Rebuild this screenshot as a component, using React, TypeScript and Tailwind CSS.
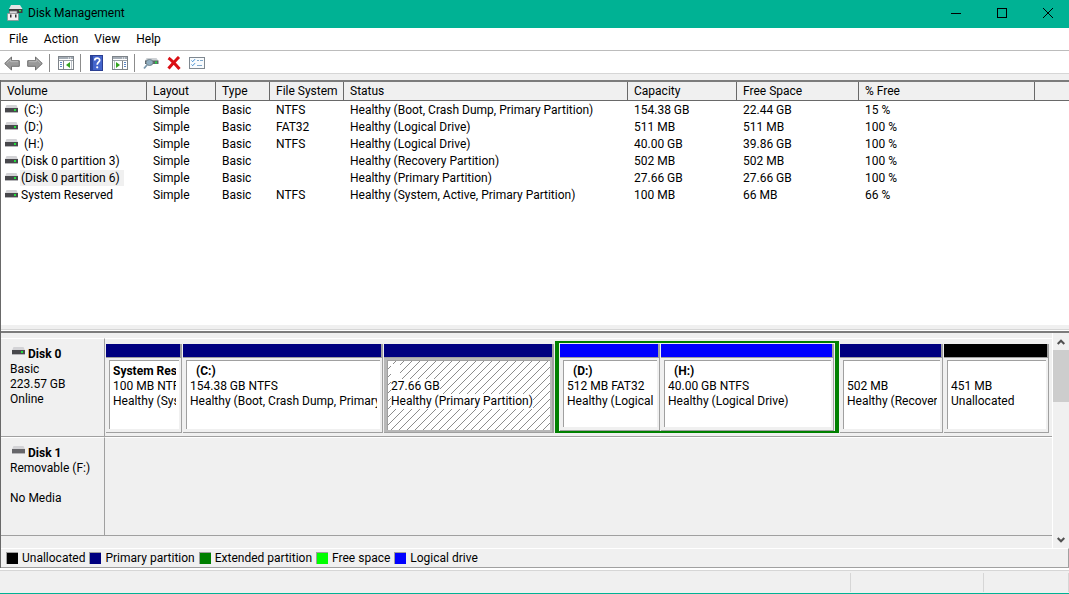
import { useState } from 'react';
import type { ReactNode } from 'react';
import clsx from 'clsx';

type Volume = {
  name: string;
  fs: string;
  status: string;
  capacity: string;
  free: string;
  percent: string;
};

const volumes: Volume[] = [
  { name: ' (C:)', fs: 'NTFS', status: 'Healthy (Boot, Crash Dump, Primary Partition)', capacity: '154.38 GB', free: '22.44 GB', percent: '15 %' },
  { name: ' (D:)', fs: 'FAT32', status: 'Healthy (Logical Drive)', capacity: '511 MB', free: '511 MB', percent: '100 %' },
  { name: ' (H:)', fs: 'NTFS', status: 'Healthy (Logical Drive)', capacity: '40.00 GB', free: '39.86 GB', percent: '100 %' },
  { name: '(Disk 0 partition 3)', fs: '', status: 'Healthy (Recovery Partition)', capacity: '502 MB', free: '502 MB', percent: '100 %' },
  { name: '(Disk 0 partition 6)', fs: '', status: 'Healthy (Primary Partition)', capacity: '27.66 GB', free: '27.66 GB', percent: '100 %' },
  { name: 'System Reserved', fs: 'NTFS', status: 'Healthy (System, Active, Primary Partition)', capacity: '100 MB', free: '66 MB', percent: '66 %' },
];

const columns = [
  { label: 'Volume', width: 'w-[146px]' },
  { label: 'Layout', width: 'w-[69px]' },
  { label: 'Type', width: 'w-[54px]' },
  { label: 'File System', width: 'w-[74px]' },
  { label: 'Status', width: 'w-[284px]' },
  { label: 'Capacity', width: 'w-[109px]' },
  { label: 'Free Space', width: 'w-[122px]' },
  { label: '% Free', width: 'w-[176px]' },
];

const legend = [
  { label: 'Unallocated', color: 'bg-black' },
  { label: 'Primary partition', color: 'bg-[#000080]' },
  { label: 'Extended partition', color: 'bg-[#008000]' },
  { label: 'Free space', color: 'bg-[#00ff00]' },
  { label: 'Logical drive', color: 'bg-[#0000ff]' },
];

function DriveIcon({ led = true }: { led?: boolean }) {
  return (
    <svg width="13" height="8" viewBox="0 0 13 8" className="shrink-0" aria-hidden="true">
      <path d="M1.5 0h10L13 3.5H0z" fill="#d3d3d6" />
      <rect y="3" width="13" height="4" fill={led ? '#48484c' : '#66666a'} />
      <rect y="7" width="13" height="1" fill="#b5b5b8" />
      {led && <rect x="9" y="4" width="2" height="2" fill="#22e03c" />}
    </svg>
  );
}

function AppIcon() {
  return (
    <svg width="16" height="16" viewBox="0 0 16 16" aria-hidden="true">
      <path d="M4 0h9l2.5 4H2z" fill="#e4e4e6" />
      <path d="M2 4h13.5v4H2z" fill="#3d3d40" />
      <path d="M12 5h2v1.5h-2z" fill="#33e04a" />
      <path d="M2.5 6H10v3H2.5z" fill="#d9d9db" stroke="#77777a" strokeWidth=".7" />
      <path d="M.5 8.5h11v7H.5z" fill="#f1f1f2" stroke="#8a8a8d" strokeWidth=".7" />
      <path d="M3 9.5h1.5v3H3zM8 9.5h1.5v3H8z" fill="#333" />
    </svg>
  );
}

function ArrowIcon({ flip }: { flip?: boolean }) {
  return (
    <svg width="16" height="15" viewBox="0 0 16 15" className={clsx(flip && '-scale-x-100')} aria-hidden="true">
      <path d="M.7 7.5 7.5 1v3.7h7.8v5.6H7.5V14z" fill="#999" stroke="#6f6f6f" strokeWidth="1" strokeLinejoin="round" />
      <path d="M2.5 7.2 6.7 3.2v2.5h7.4" fill="none" stroke="#bbb" strokeWidth="1" />
    </svg>
  );
}

function PaneIcon({ right }: { right?: boolean }) {
  return (
    <svg width="16" height="14" viewBox="0 0 16 14" aria-hidden="true">
      <rect x=".5" y=".5" width="15" height="13" fill="#fff" stroke="#7d8389" />
      <path d="M1 1h14v2H1z" fill="#a5adb6" />
      <path d="M10 1.5h1v1h-1zM12 1.5h1v1h-1z" fill="#fff" />
      <path d="M1 4.5h14" stroke="#9aa1a8" />
      {right ? (
        <>
          <path d="M10.5 5v8" stroke="#7d8389" />
          <path d="M12 6.5h2M12 8.5h2M12 10.5h2" stroke="#5b86c4" />
          <path d="M4 6v6l4-3z" fill="#35a51f" />
          <path d="M2.5 5v8" stroke="#b8bec5" />
        </>
      ) : (
        <>
          <path d="M5.5 5v8" stroke="#7d8389" />
          <path d="M2 6.5h2M2 8.5h2M2 10.5h2" stroke="#5b86c4" />
          <path d="M12 6v6L8 9z" fill="#35a51f" />
          <path d="M13.5 5v8" stroke="#b8bec5" />
        </>
      )}
    </svg>
  );
}

function HelpIcon() {
  return (
    <svg width="13" height="16" viewBox="0 0 13 16" aria-hidden="true">
      <rect x=".5" y=".5" width="12" height="15" fill="#4465cc" stroke="#2b3f92" />
      <path d="M1 1h2v14H1z" fill="#2d479f" />
      <path d="M4.700 5.500c0-3.200 5-3.200 5-.3 0 2-2.500 2-2.500 4.600" fill="none" stroke="#fff" strokeWidth="1.700" />
      <circle cx="7.200" cy="12.300" r="1.100" fill="#fff" />
    </svg>
  );
}

function ExploreIcon() {
  return (
    <svg width="16" height="14" viewBox="0 0 16 14" aria-hidden="true">
      <path d="M3.500 2h10l2 3H2z" fill="#cdd1d4" />
      <path d="M2 4.500h13.500v3.500H2z" fill="#5c6468" />
      <path d="M12 5.500h2v2h-2z" fill="#27d943" />
      <ellipse cx="6.500" cy="6.500" rx="3.500" ry="3" fill="#8fadc0" stroke="#75858f" />
      <path d="M4 9 1 12.500" stroke="#7b98ad" strokeWidth="1.800" />
    </svg>
  );
}

function DeleteIcon() {
  return (
    <svg width="14" height="14" viewBox="0 0 14 14" aria-hidden="true">
      <path d="M1.500 2C5 4.500 9 9 12.500 13M12 1C8.500 4.500 5 8.500 1.500 12.500" stroke="#da0f14" strokeWidth="3" fill="none" />
    </svg>
  );
}

function ListIcon() {
  return (
    <svg width="16" height="12" viewBox="0 0 16 12" aria-hidden="true">
      <rect x=".5" y=".5" width="15" height="11" fill="#f8fbfd" stroke="#7f8890" />
      <path d="m2.500 3.500 1.200 1.200L6 2.200M2.500 7.500l1.200 1.200L6 6.200" stroke="#3a8ad0" fill="none" />
      <path d="M8 3.500h2M11 3.500h3M8 8.500h5" stroke="#7fa8cc" />
    </svg>
  );
}

function ToolButton({ label, children }: { label: string; children: ReactNode }) {
  return (
    <button type="button" aria-label={label} title={label} className="flex h-5 w-[23px] items-center justify-center">
      {children}
    </button>
  );
}

function ToolDivider() {
  return <div className="mr-1 ml-[3px] h-[18px] w-px bg-[#8c8c8c]" />;
}

function Cell({ children }: { children?: ReactNode }) {
  return <td className="p-0 pt-0.5 pl-1.5 leading-[15px]">{children}</td>;
}

type PartitionProps = {
  grow: string;
  color: string;
  title?: string;
  size: string;
  status: string;
  selected?: boolean;
};

function Partition({ grow, color, title, size, status, selected }: PartitionProps) {
  return (
    <div className={clsx('flex min-w-0 basis-0 flex-col', grow)}>
      <div className="mr-px border-r-2 border-[#a0a0a0]">
        <div className={clsx('h-[13px]', color)} />
      </div>
      <div
        className={clsx(
          'mr-px flex grow border-t border-b border-[#a0a0a0] p-0.5',
          selected ? 'border-r-2 bg-[#b8b8b8]' : 'border-r bg-[#f0f0f0] pb-[3px]',
        )}
      >
        <div
          className={clsx(
            'ml-px min-w-0 grow overflow-hidden border-t border-l border-[#a0a0a0] bg-white px-[3px] pt-[3px]',
            selected && 'bg-[linear-gradient(135deg,transparent_47%,#8c8c8c_47%,#8c8c8c_53%,transparent_53%)] bg-[length:8px_8px]',
          )}
        >
          <div className="flex flex-col items-start overflow-hidden leading-[15px]">
            <p className="h-[15px] bg-white font-bold whitespace-pre">{title ?? '   '}</p>
            <p className="bg-white whitespace-nowrap">{size}</p>
            <p className="bg-white whitespace-nowrap">{status}</p>
          </div>
        </div>
      </div>
    </div>
  );
}

function DiskInfo({ name, led, lines }: { name: string; led: boolean; lines: string[] }) {
  return (
    <div className="w-[104px] shrink-0 border-t border-r border-b border-t-white border-r-[#a0a0a0] border-b-[#a0a0a0] pt-2 pl-[9px] leading-[15px]">
      <h2 className="flex gap-[3px] pl-0.5 font-bold">
        <DriveIcon led={led} />
        {name}
      </h2>
      {lines.map((line, i) => (
        <p key={i} className="h-[15px]">{line}</p>
      ))}
    </div>
  );
}

export default function App() {
  const [selected, setSelected] = useState('(Disk 0 partition 6)');

  return (
    <div className="flex h-screen flex-col overflow-hidden border-b border-[#00b294] bg-[#f0f0f0] font-['Roboto','Noto_Sans',sans-serif] text-[12px] leading-[17px] text-black">
      {/* Title bar */}
      <header className="flex h-7 shrink-0 items-center bg-[#00b294] pb-0.5 pl-[7px]">
        <AppIcon />
        <h1 className="grow pl-[5px]">Disk Management</h1>
        <div className="-mr-0.5 flex">
          <button type="button" aria-label="Minimize" className="flex w-[46px] justify-center">
            <svg width="10" height="10"><path d="M0 5.500h10" stroke="#000" /></svg>
          </button>
          <button type="button" aria-label="Maximize" className="flex w-[46px] justify-center">
            <svg width="10" height="10"><rect x=".5" y=".5" width="9" height="9" fill="none" stroke="#000" /></svg>
          </button>
          <button type="button" aria-label="Close" className="flex w-[46px] justify-center">
            <svg width="10" height="10"><path d="m0 0 10 10M10 0 0 10" stroke="#000" /></svg>
          </button>
        </div>
      </header>

      <nav className="flex h-[23px] shrink-0 items-center gap-4 border-b border-[#bcbcbc] bg-white pl-[9px]">
        <button type="button">File</button>
        <button type="button">Action</button>
        <button type="button">View</button>
        <button type="button">Help</button>
      </nav>

      {/* Toolbar */}
      <div className="flex h-[23px] shrink-0 items-center border-b border-[#d6d6d6] bg-white pt-0.5">
        <ToolButton label="Back"><ArrowIcon /></ToolButton>
        <ToolButton label="Forward"><ArrowIcon flip /></ToolButton>
        <ToolDivider />
        <ToolButton label="Show/Hide Console Tree"><PaneIcon /></ToolButton>
        <ToolDivider />
        <ToolButton label="Help"><HelpIcon /></ToolButton>
        <ToolButton label="Show/Hide Action Pane"><PaneIcon right /></ToolButton>
        <ToolDivider />
        <ToolButton label="Explore"><ExploreIcon /></ToolButton>
        <ToolButton label="Delete"><DeleteIcon /></ToolButton>
        <ToolButton label="Properties"><ListIcon /></ToolButton>
      </div>

      {/* Volume list */}
      <main className="mt-1.5 flex min-h-0 grow flex-col border-l border-[#696969]">
        <div className="min-h-0 grow overflow-hidden border-t-2 border-[#7c7c7c] bg-white">
          <table className="w-full table-fixed border-separate border-spacing-0 text-left">
            <thead>
              <tr className="h-[19px] bg-[#f0f0f0]">
                {columns.map((col) => (
                  <th key={col.label} scope="col" className={clsx('border-r border-b border-[#696969] p-0 pl-1.5 font-normal whitespace-nowrap', col.width)}>
                    {col.label}
                  </th>
                ))}
                <td className="border-b border-[#696969] p-0" />
              </tr>
            </thead>
            <tbody>
              {volumes.map((v) => (
                <tr key={v.name} className="h-[17px] whitespace-nowrap" onClick={() => setSelected(v.name)}>
                  <td className="p-0">
                    <div className="flex items-start pt-px pl-1">
                      <div className="pt-[3px]"><DriveIcon /></div>
                      <span className={clsx('ml-0.5 h-4 pt-px pr-1 pl-px leading-[15px] whitespace-pre', v.name === selected && 'bg-[#f0f0f0]')}>{v.name}</span>
                    </div>
                  </td>
                  <Cell>Simple</Cell>
                  <Cell>Basic</Cell>
                  <Cell>{v.fs}</Cell>
                  <Cell>{v.status}</Cell>
                  <Cell>{v.capacity}</Cell>
                  <Cell>{v.free}</Cell>
                  <Cell>{v.percent}</Cell>
                  <Cell />
                </tr>
              ))}
            </tbody>
          </table>
        </div>
        <div className="flex h-2 shrink-0 flex-col justify-end border-b-2 border-[#7c7c7c]">
          <div className="h-0.5 border-t border-[#d6d6d6] bg-white" />
        </div>

        {/* Graphical view */}
        <div className="flex h-[215px] shrink-0">
          <div className="min-w-0 grow pt-[5px]">
            <section className="flex h-[99px]">
              <DiskInfo name="Disk 0" led lines={['Basic', '223.57 GB', 'Online']} />
              <div className="flex min-w-0 grow border-t border-b border-t-white border-b-[#a0a0a0] pt-0.5 pr-0.5 pb-[3px] pl-px">
                <div className="flex min-w-0 grow-[449] basis-0 pt-[3px]">
                  <Partition grow="grow-[77]" color="bg-[#000080]" title="System Reserved" size="100 MB NTFS" status="Healthy (System, Active, Primary Partition)" />
                  <Partition grow="grow-[201]" color="bg-[#000080]" title="  (C:)" size="154.38 GB NTFS" status="Healthy (Boot, Crash Dump, Primary Partition)" />
                  <Partition grow="grow-[171]" color="bg-[#000080]" size="27.66 GB" status="Healthy (Primary Partition)" selected />
                </div>
                {/* Extended partition frame */}
                <div className="flex min-w-0 grow-[275] basis-0 border-x-4 border-y-2 border-[#008000] pt-px pl-px">
                  <Partition grow="grow-[101]" color="bg-[#0000ff]" title="  (D:)" size="512 MB FAT32" status="Healthy (Logical Drive)" />
                  <Partition grow="grow-[174]" color="bg-[#0000ff]" title="  (H:)" size="40.00 GB NTFS" status="Healthy (Logical Drive)" />
                </div>
                <div className="flex min-w-0 grow-[210] basis-0 pt-[3px] pl-px">
                  <Partition grow="grow-[104]" color="bg-[#000080]" size="502 MB" status="Healthy (Recovery Partition)" />
                  <Partition grow="grow-[106]" color="bg-black" size="451 MB" status="Unallocated" />
                </div>
              </div>
            </section>
            <section className="flex h-[99px]">
              <DiskInfo name="Disk 1" led={false} lines={['Removable (F:)', '', 'No Media']} />
              <div className="grow border-t border-b border-t-white border-b-[#a0a0a0]" />
            </section>
          </div>
          <div className="flex w-[17px] shrink-0 flex-col border-l border-white">
            <button type="button" aria-label="Scroll up" className="flex h-[17px] items-center justify-center">
              <svg width="8" height="6"><path d="m.7 5 3.300-3.300L7.300 5" fill="none" stroke="#505050" strokeWidth="2" /></svg>
            </button>
            <div className="grow">
              <div className="h-[52px] bg-[#cdcdcd]" />
            </div>
            <button type="button" aria-label="Scroll down" className="flex h-[17px] items-center justify-center">
              <svg width="8" height="6"><path d="m.7 1 3.300 3.300L7.300 1" fill="none" stroke="#505050" strokeWidth="2" /></svg>
            </button>
          </div>
        </div>

        <ul className="flex h-5 shrink-0 items-center gap-1 border-t border-r border-b border-t-white border-r-[#a0a0a0] border-b-[#a0a0a0] pl-[5px]">
          {legend.map((item) => (
            <li key={item.label} className="flex items-center gap-1">
              <span className={clsx('size-3 border-t border-l border-[#a0a0a0]', item.color)} />
              {item.label}
            </li>
          ))}
        </ul>
      </main>

      {/* Status bar */}
      <footer className="flex h-[25px] shrink-0 border-t-2 border-white">
        <div className="flex grow border-t border-[#d6d6d6] pt-0.5 pb-px">
          <div className="grow border-r border-[#d6d6d6]" />
          <div className="w-[133px] border-r border-[#d6d6d6]" />
          <div className="w-[85px] border-r border-[#d6d6d6]" />
        </div>
      </footer>
    </div>
  );
}
